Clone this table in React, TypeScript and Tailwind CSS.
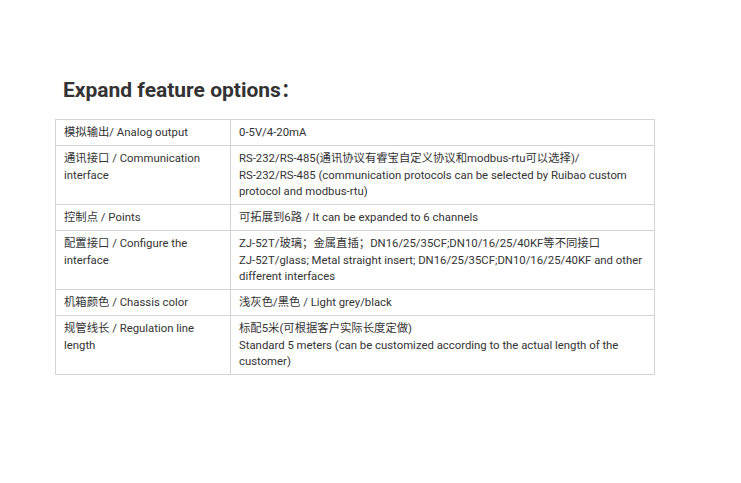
const rows: [string, string[]][] = [
  ["模拟输出/ Analog output", ["0-5V/4-20mA"]],
  [
    "通讯接口 / Communication interface",
    [
      "RS-232/RS-485(通讯协议有睿宝自定义协议和modbus-rtu可以选择)/",
      "RS-232/RS-485 (communication protocols can be selected by Ruibao custom protocol and modbus-rtu)",
    ],
  ],
  ["控制点 / Points", ["可拓展到6路 / It can be expanded to 6 channels"]],
  [
    "配置接口 / Configure the interface",
    [
      "ZJ-52T/玻璃；金属直插；DN16/25/35CF;DN10/16/25/40KF等不同接口",
      "ZJ-52T/glass; Metal straight insert; DN16/25/35CF;DN10/16/25/40KF and other different interfaces",
    ],
  ],
  ["机箱颜色 / Chassis color", ["浅灰色/黑色 / Light grey/black"]],
  [
    "规管线长 / Regulation line length",
    [
      "标配5米(可根据客户实际长度定做)",
      "Standard 5 meters (can be customized according to the actual length of the customer)",
    ],
  ],
];

export default function App() {
  return (
    <div
      className="w-[741px] h-[483px] bg-white pl-[55px] pt-[77px]"
      style={{ fontFamily: 'Roboto, "Noto Sans CJK SC", sans-serif' }}
    >
      <h1 className="pl-[8px] text-[21px] leading-[26px] font-bold text-[#333333]">
        Expand feature options<span className="text-[19px]">：</span>
      </h1>
      <table className="mt-[15px] w-[600px] border-collapse text-[11.35px] leading-[16.75px] text-[#333333]">
        <tbody>
          {rows.map(([label, lines]) => (
            <tr key={label}>
              <td className="w-[175px] border border-[#d4d4d4] px-[8px] py-[4px] align-top">
                {label}
              </td>
              <td className="border border-[#d4d4d4] px-[8px] py-[4px] align-top">
                {lines.map((l) => (
                  <div key={l}>{l}</div>
                ))}
              </td>
            </tr>
          ))}
        </tbody>
      </table>
    </div>
  );
}
